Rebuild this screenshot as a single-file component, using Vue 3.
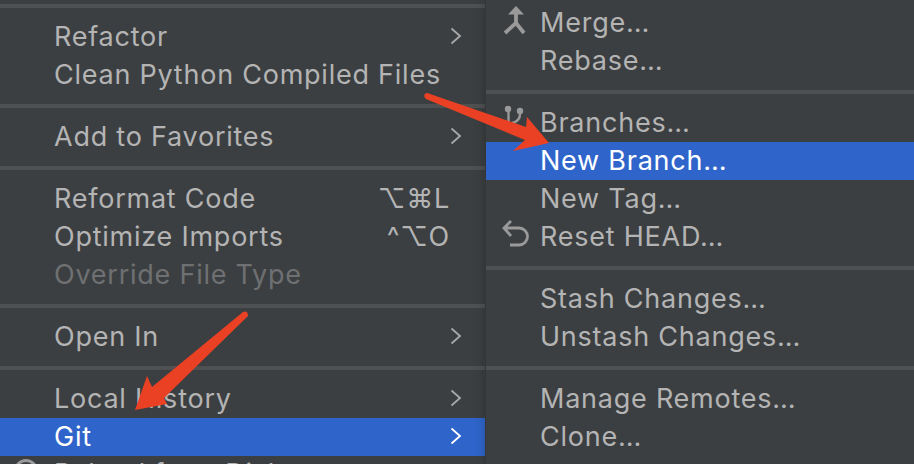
<script setup>
const leftGroups = [
  [{ label: 'Refactor', more: true }, { label: 'Clean Python Compiled Files' }],
  [{ label: 'Add to Favorites', more: true }],
  [
    { label: 'Reformat Code', keys: '⌥⌘L' },
    { label: 'Optimize Imports', keys: '^⌥O' },
    { label: 'Override File Type', disabled: true }
  ],
  [{ label: 'Open In', more: true }],
  [
    { label: 'Local History', more: true },
    { label: 'Git', more: true, active: true },
    { label: 'Reload from Disk', icon: 'reload' }
  ]
]

const rightGroups = [
  [{ label: 'Merge…', icon: 'merge' }, { label: 'Rebase…' }],
  [
    { label: 'Branches…', icon: 'branch' },
    { label: 'New Branch…', active: true },
    { label: 'New Tag…' },
    { label: 'Reset HEAD…', icon: 'reset' }
  ],
  [{ label: 'Stash Changes…' }, { label: 'Unstash Changes…' }],
  [{ label: 'Manage Remotes…' }, { label: 'Clone…' }]
]
</script>

<template>
  <div class="screen">
    <div class="menu left">
      <div v-for="(group, i) in leftGroups" :key="i" class="group">
        <div
          v-for="item in group"
          :key="item.label"
          class="row"
          :class="{ active: item.active, disabled: item.disabled, tail: item.icon === 'reload' }"
        >
          <svg v-if="item.icon === 'reload'" class="icon" width="26" height="38" viewBox="0 0 26 38">
            <circle cx="11" cy="16" r="10.5" fill="none" stroke="#9a9a9a" stroke-width="3" />
          </svg>
          <span class="label">{{ item.label }}</span>
          <span v-if="item.keys" class="keys">{{ item.keys }}</span>
          <svg v-if="item.more" class="chevron" width="12" height="18" viewBox="0 0 12 18">
            <path d="M1.5 1.5 L10 9 L1.5 16.5" fill="none" stroke="currentColor" stroke-width="1.8" />
          </svg>
        </div>
      </div>
    </div>
    <div class="menu right">
      <div v-for="(group, i) in rightGroups" :key="i" class="group">
        <div
          v-for="item in group"
          :key="item.label"
          class="row"
          :class="{ active: item.active }"
        >
          <svg v-if="item.icon === 'merge'" class="icon" width="26" height="38" viewBox="0 0 26 38">
            <path d="M15 2 L7 10.5 H23 Z" fill="#9a9a9a" />
            <path d="M15 9 V19 L4 29 M15 19 L23 29" fill="none" stroke="#9a9a9a" stroke-width="3.8" />
          </svg>
          <svg v-else-if="item.icon === 'branch'" class="icon" width="26" height="38" viewBox="0 0 26 38">
            <circle cx="7" cy="5" r="3.2" fill="#9a9a9a" />
            <circle cx="19" cy="7" r="3.2" fill="#9a9a9a" />
            <path d="M7.5 5 V18 M19 7 V10 Q19 17 11 19" fill="none" stroke="#9a9a9a" stroke-width="2.4" />
          </svg>
          <svg v-else-if="item.icon === 'reset'" class="icon" width="30" height="38" viewBox="0 0 30 38">
            <path d="M10 3 L3 10 L10 18 M3 10 H18 A8.5 8.5 0 0 1 18 27 H9" fill="none" stroke="#9a9a9a" stroke-width="2.8" />
          </svg>
          <span class="label">{{ item.label }}</span>
        </div>
      </div>
    </div>
    <svg class="arrows" width="914" height="464" viewBox="0 0 914 464">
      <path d="M425 94 Q427 92 430 94 L526 127 L527 117 L549 143 L513 151 L525 140 L426 99 Q423 96 425 94 Z" fill="#ea4023" />
      <path d="M243 312 Q248 310 248 316 L164 398 L167 404 L135 410 L147 376 L152 387 Z" fill="#ea4023" />
    </svg>
  </div>
</template>

<style>
html, body {
  margin: 0;
  background: #3c3f41;
}
</style>

<style scoped>
.screen {
  position: relative;
  width: 914px;
  height: 464px;
  overflow: hidden;
  display: flex;
  background: #3c3f41;
  font-family: Inter, "Liberation Sans", sans-serif;
  font-size: 27px;
  letter-spacing: 0.76px;
  color: #b4b4b4;
}

.menu {
  margin-top: 4px;
}

.menu.left {
  width: 485px;
  flex: none;
}

.menu.right {
  position: relative;
  flex: 1;
  border-left: 1px solid #333537;
  box-shadow: 0 0 10px rgba(0, 0, 0, 0.22);
  margin-top: 0;
  padding-top: 4px;
  background: #3c3f41;
}

.group {
  padding: 10px 0;
  border-top: 4px solid #4f5051;
}

.right .group:first-child {
  border-top: none;
  padding-top: 0;
}

.row {
  display: flex;
  align-items: center;
  position: relative;
  height: 38px;
  padding: 0 23px 0 54px;
  white-space: nowrap;
}

.row.tail {
  margin-top: -1px;
}

.label {
  flex: 1;
  padding-bottom: 2px;
}

.keys {
  margin-right: 12px;
  padding-bottom: 2px;
}

.chevron {
  flex: none;
  margin-bottom: 2px;
  color: #a9a9a9;
}

.icon {
  position: absolute;
  left: 15px;
  top: 0;
}

.active {
  background: #2f65ca;
  color: #fff;
}

.active .chevron {
  color: #fff;
}

.disabled {
  color: #6f7072;
}

.arrows {
  position: absolute;
  left: 0;
  top: 0;
  pointer-events: none;
}
</style>
